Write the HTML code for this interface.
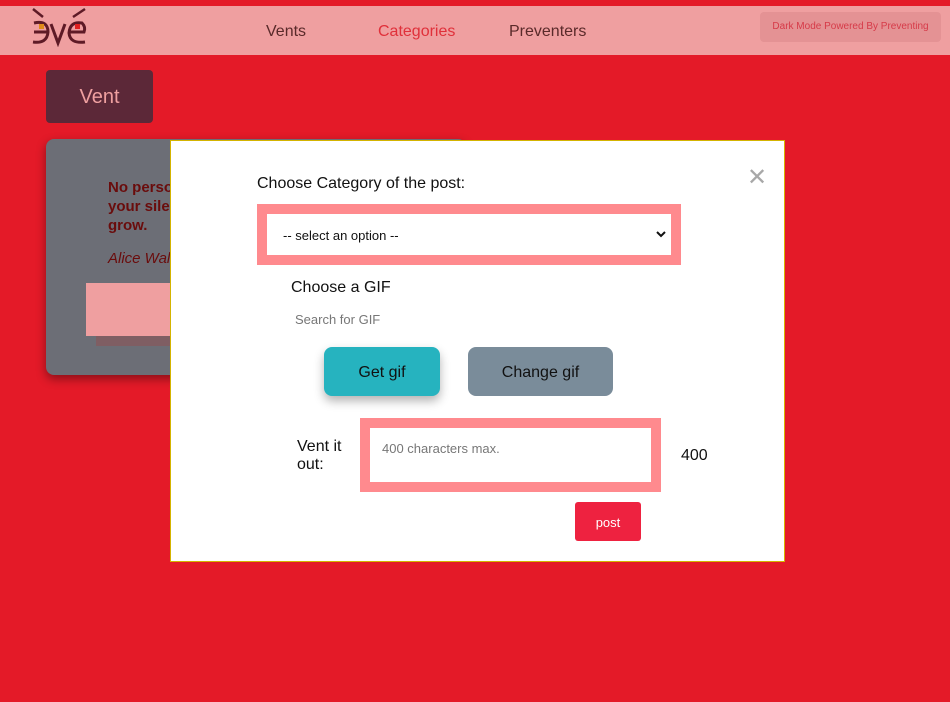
<!DOCTYPE html>
<html><head><meta charset="utf-8"><style>
*{margin:0;padding:0;box-sizing:border-box}
body{width:950px;height:702px;background:#e41a28;font-family:"Liberation Sans","DejaVu Sans",sans-serif;position:relative;overflow:hidden}
.a{position:absolute}
</style></head><body>
<div class="a" style="left:0;top:6px;width:950px;height:49px;background:#ef9fa0"></div>
<svg class="a" style="left:30px;top:7px" width="58" height="40" viewBox="0 0 58 40">
<path d="M3 2 L13 10 M55 2 L43 10" stroke="#5e1a26" stroke-width="2.5" fill="none"/>
<path d="M4 16 Q18 13 18 25 Q17 37 3 35 M4 25 L18 25" stroke="#5e1a26" stroke-width="3" fill="none"/>
<rect x="9" y="17" width="5" height="5" fill="#e08a18"/>
<path d="M21 17 L28 36 L35 17" stroke="#5e1a26" stroke-width="3" fill="none"/>
<path d="M55 35 Q40 37 39 26 Q40 14 52 16 Q56 20 54 25 L40 25" stroke="#5e1a26" stroke-width="3" fill="none"/>
<rect x="45" y="17" width="5" height="5" fill="#e02020"/>
</svg>
<div class="a" style="left:266px;top:23px;font-size:16px;color:#5a2a2a">Vents</div>
<div class="a" style="left:378px;top:23px;font-size:16px;color:#e0303a">Categories</div>
<div class="a" style="left:509px;top:23px;font-size:16px;color:#5a2a2a">Preventers</div>
<div class="a" style="left:760px;top:12px;width:181px;height:30px;background:#e49294;border-radius:4px;font-size:10px;color:#d63a48;text-align:center;line-height:30px">Dark Mode Powered By Preventing</div>
<div class="a" style="left:46px;top:70px;width:107px;height:53px;background:#5c2838;border-radius:4px;color:#efa0a0;font-size:20px;text-align:center;line-height:55px">Vent</div>
<div class="a" style="left:46px;top:139px;width:420px;height:236px;background:#6c6e76;border-radius:8px;box-shadow:0 4px 10px rgba(0,0,0,.4)"></div>
<div class="a" style="left:108px;top:178px;font-size:15px;font-weight:bold;color:#6a0c0c;line-height:19px">No person is your friend who demands<br>your silence, or denies your right to<br>grow.</div>
<div class="a" style="left:108px;top:250px;font-size:15px;font-style:italic;color:#6a0c0c">Alice Walker</div>
<div class="a" style="left:96px;top:294px;width:120px;height:52px;background:#7f5e63"></div>
<div class="a" style="left:86px;top:283px;width:120px;height:53px;background:#ef9fa0"></div>
<div class="a" style="left:170px;top:140px;width:615px;height:422px;background:#fff;border:1px solid #d4b400"></div>
<div class="a" style="left:747px;top:165px;font-size:24px;color:#a8a8a8;line-height:26px">✕</div>
<div class="a" style="left:257px;top:175px;font-size:16px;color:#111">Choose Category of the post:</div>
<div class="a" style="left:257px;top:204px;width:424px;height:61px;background:#ff8a8e"></div>
<div class="a" style="left:267px;top:214px;width:404px;height:41px;background:#fff;font-size:13px;color:#111;line-height:43px;padding-left:16px">-- select an option --</div>
<svg class="a" style="left:656px;top:231px" width="10" height="8"><path d="M1 1 L5 5 L9 1" stroke="#111" stroke-width="2" fill="none"/></svg>
<div class="a" style="left:291px;top:279px;font-size:16px;color:#111">Choose a GIF</div>
<div class="a" style="left:295px;top:312px;font-size:13px;color:#777">Search for GIF</div>
<div class="a" style="left:324px;top:347px;width:116px;height:49px;background:#26b3bf;border-radius:8px;box-shadow:0 5px 10px rgba(0,0,0,.3);font-size:16px;color:#111;text-align:center;line-height:51px">Get gif</div>
<div class="a" style="left:468px;top:347px;width:145px;height:49px;background:#7a8c9a;border-radius:8px;font-size:16px;color:#111;text-align:center;line-height:51px">Change gif</div>
<div class="a" style="left:297px;top:438px;font-size:16px;color:#111;line-height:18px">Vent it<br>out:</div>
<div class="a" style="left:360px;top:418px;width:301px;height:74px;background:#ff8a8e"></div>
<div class="a" style="left:370px;top:428px;width:281px;height:54px;background:#fff;font-size:13px;color:#777;padding:13px 12px">400 characters max.</div>
<div class="a" style="left:681px;top:447px;font-size:16px;color:#111">400</div>
<div class="a" style="left:575px;top:502px;width:66px;height:39px;background:#ee2240;border-radius:3px;font-size:13px;color:#fff;text-align:center;line-height:41px">post</div>
</body></html>
